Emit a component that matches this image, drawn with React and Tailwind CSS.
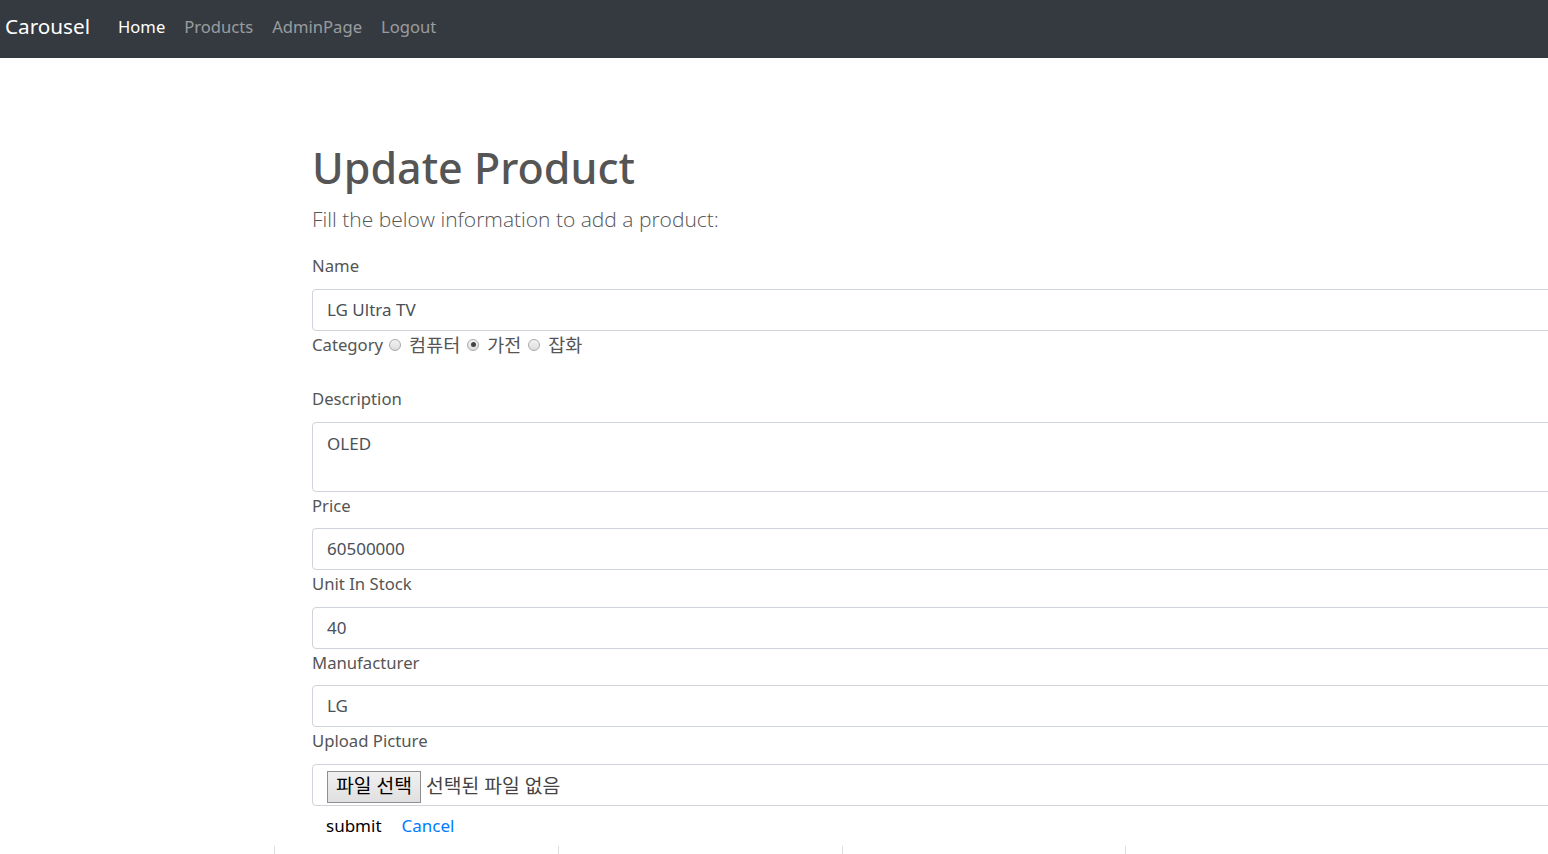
import React from 'react';

const font = { fontFamily: '"Noto Sans", "Noto Sans CJK KR", sans-serif' };
const lightFont = { fontFamily: '"Open Sans", "Noto Sans", sans-serif' };

function Label({ children }) {
  return (
    <div className="h-[36.5px] pt-[2px] text-[16.7px] leading-6 text-[#555]">{children}</div>
  );
}

function Field({ label, value, tall }) {
  return (
    <div>
      <Label>{label}</Label>
      <div
        className={
          'w-[1400px] border border-[#ced4da] rounded-[4px] bg-white px-[14px] text-[17px] text-[#495057] ' +
          (tall ? 'h-[70px] pt-[8px]' : 'h-[42px] flex items-center')
        }
      >
        {value}
      </div>
    </div>
  );
}

function Radio({ checked, label }) {
  return (
    <span className="inline-flex items-center">
      <span className="ml-[6px] mr-[8px] w-[12px] h-[12px] rounded-full border border-[#a9a9a9] bg-gradient-to-b from-[#f4f4f4] to-[#dcdcdc] flex items-center justify-center">
        {checked && <span className="w-[5px] h-[5px] rounded-full bg-[#444]" />}
      </span>
      <span className="text-[18.5px] mr-[1px]">{label}</span>
    </span>
  );
}

export default function App() {
  return (
    <div className="w-full h-[854px] overflow-hidden bg-white" style={font}>
      {/* Navbar */}
      <nav className="h-[58px] bg-[#343a40] flex items-center pl-[5px] pb-[4px]">
        <span className="text-white text-[20.7px] mr-[28px]">Carousel</span>
        <ul className="flex items-center gap-[19px] text-[16.6px]">
          <li className="text-white">Home</li>
          <li className="text-white/50">Products</li>
          <li className="text-white/50">AdminPage</li>
          <li className="text-white/50">Logout</li>
        </ul>
      </nav>

      {/* Form */}
      <div className="pl-[312px] pt-[82px]">
        <h1 className="text-[43px] leading-[56px] font-medium text-[#555]">Update Product</h1>
        <p className="mt-[7px] text-[21px] leading-[32px] font-light text-[#555]" style={lightFont}>
          Fill the below information to add a product:
        </p>

        <div className="mt-[17px]">
          <Field label="Name" value="LG Ultra TV" />
          <div className="flex items-center h-[26px] mt-[1px] text-[16.7px] text-[#555]">
            <span>Category</span>
            <Radio label="컴퓨터" />
            <Radio checked label="가전" />
            <Radio label="잡화" />
          </div>
          <div className="h-[27.5px]" />
          <Field label="Description" value="OLED" tall />
          <Field label="Price" value="60500000" />
          <Field label="Unit In Stock" value="40" />
          <Field label="Manufacturer" value="LG" />
          <div>
            <Label>Upload Picture</Label>
            <div className="w-[1400px] h-[42px] border border-[#ced4da] rounded-[4px] flex items-start pt-[6px] pl-[14px] text-[19.3px] text-[#444]">
              <span className="h-[32px] px-[8px] flex items-center border border-[#8f8f8f] bg-gradient-to-b from-[#f0f0f0] to-[#e0e0e0] text-black">
                파일 선택
              </span>
              <span className="ml-[5px] h-[32px] flex items-center">선택된 파일 없음</span>
            </div>
          </div>
          <div className="flex items-center h-[40px] pl-[14px] text-[17px]">
            <span className="text-black">submit</span>
            <span className="ml-[20px] text-[#007bff]">Cancel</span>
          </div>
        </div>
      </div>

      {/* Bottom table edge */}
      <div className="flex h-[10px] pl-[274px]">
        <div className="w-[284px] border-l border-[#ddd]" />
        <div className="w-[284px] border-l border-[#ddd]" />
        <div className="w-[283px] border-l border-[#ddd]" />
        <div className="w-[284px] border-l border-[#ddd]" />
      </div>
    </div>
  );
}
